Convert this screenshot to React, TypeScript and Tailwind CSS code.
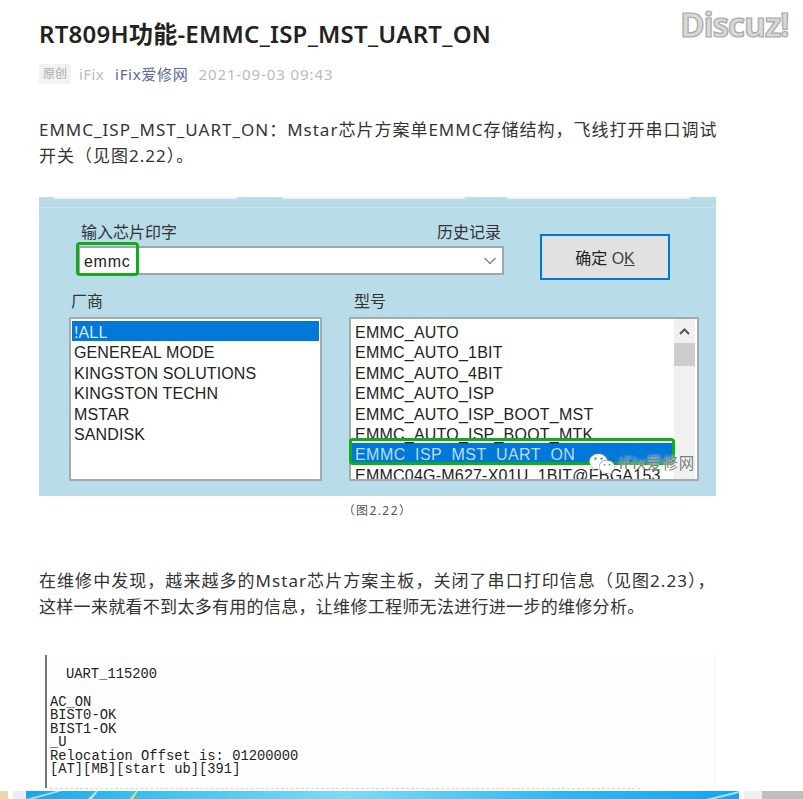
import React from 'react';
import { FaWeixin } from 'react-icons/fa';

const vendors = ['!ALL', 'GENEREAL MODE', 'KINGSTON SOLUTIONS', 'KINGSTON TECHN', 'MSTAR', 'SANDISK'];
const models = [
    'EMMC_AUTO',
    'EMMC_AUTO_1BIT',
    'EMMC_AUTO_4BIT',
    'EMMC_AUTO_ISP',
    'EMMC_AUTO_ISP_BOOT_MST',
    'EMMC_AUTO_ISP_BOOT_MTK',
    'EMMC_ISP_MST_UART_ON',
    'EMMC04G-M627-X01U_1BIT@FBGA153',
];
const uartLines = ['AC_ON', 'BIST0-OK', 'BIST1-OK', '_U', 'Relocation Offset is: 01200000', '[AT][MB][start ub][391]'];

const ChipDialog: React.FC = () => (
    <div className="relative h-[299px] bg-[#b8dce8] font-['Liberation_Sans','Noto_Sans_CJK_SC',sans-serif] text-[16px] text-[#222] overflow-hidden">
        {/* tabs cut off by the top of the picture */}
        <div className="flex h-[2px] pl-[15px]">
            <div className="w-[183px] bg-[#f2f2f2]" />
            <div className="w-[183px] ml-[45px] bg-[#f2f2f2]" />
            <div className="w-[183px] ml-[42px] bg-[#f2f2f2]" />
        </div>
        <div className="mt-[8px] border-t border-[#cfe2e8]">
            <div className="flex items-start pl-[39px] pt-[15px]">
                <div className="w-[426px]">
                    <div className="flex justify-between h-[20px] px-[3px] leading-[20px] text-[#333]">
                        <span>输入芯片印字</span>
                        <span>历史记录</span>
                    </div>
                    <div className="flex items-center justify-between h-[29px] mt-[3px] pl-[4px] pr-[5px] bg-white border-2 border-[#9fa6ab]">
                        <span className="pt-[2px] tracking-[0.7px] text-[#222]">emmc</span>
                        <svg width="14" height="8" viewBox="0 0 14 8" fill="none" stroke="#8a8a8a" strokeWidth="1.5">
                            <path d="M1.5 1 7 6.5 12.5 1" />
                        </svg>
                    </div>
                </div>
                <div className="flex items-center justify-center w-[130px] h-[46px] mt-[11px] ml-[36px] pt-[4px] bg-[#e1e1e1] border-2 border-[#0078d7] text-[#222]">
                    确定&nbsp;<span className="text-[#444]">O<span className="underline">K</span></span>
                </div>
            </div>
            <div className="flex pl-[30px] mt-[12px]">
                <div className="w-[253px]">
                    <div className="h-[20px] pl-[2px] leading-[20px] text-[#333]">厂商</div>
                    <div className="h-[164px] mt-[5px] pt-[2px] px-px bg-white border-2 border-[#a4abb0] tracking-[0.12px]">
                        {vendors.map((name, i) => (
                            <div key={name} className={i === 0 ? 'h-[20.4px] pl-[2px] leading-[24px] bg-[#0078d7] text-[#d5e9fa]' : 'h-[20.4px] pl-[2px] leading-[24px]'}>
                                {name}
                            </div>
                        ))}
                    </div>
                </div>
                <div className="w-[350px] ml-[27px]">
                    <div className="h-[20px] pl-[5px] leading-[20px] text-[#333]">型号</div>
                    <div className="flex h-[164px] mt-[5px] pr-[2px] bg-white border-2 border-[#a4abb0] overflow-hidden">
                        <div className="flex-1 pt-[2px] pl-px overflow-hidden whitespace-nowrap tracking-[0.22px]">
                            {models.map(name => (
                                <div key={name} className={name === 'EMMC_ISP_MST_UART_ON' ? 'h-[20.4px] pl-[3px] leading-[24px] tracking-[0.45px] bg-[#0078d7] text-[#bcdcf7]' : 'h-[20.4px] pl-[3px] leading-[24px]'}>
                                    {name}
                                </div>
                            ))}
                        </div>
                        <div className="w-[21px] bg-[#f0f0f0]">
                            <div className="flex items-center justify-center h-[24px]">
                                <svg width="11" height="7" viewBox="0 0 11 7" fill="none" stroke="#555" strokeWidth="2">
                                    <path d="M1 6 5.5 1.5 10 6" />
                                </svg>
                            </div>
                            <div className="h-[23px] bg-[#cdcdcd]" />
                        </div>
                    </div>
                </div>
            </div>
        </div>
        {/* green markers and watermark lie over the picture */}
        <div className="absolute left-[37px] top-[45px] w-[63px] h-[34px] border-[3px] border-[#12ab1a] rounded-[4px]" />
        <div className="absolute left-[310px] top-[241px] w-[326px] h-[27px] border-[3px] border-[#12ab1a] rounded-[4px]" />
        <div className="absolute left-[550px] top-[255px] flex items-center gap-[4px] text-[15.5px] tracking-[0.75px] text-[#7d7d7d] font-['Noto_Sans','Noto_Sans_CJK_SC',sans-serif] [text-shadow:0_0_3px_#fff]">
            <FaWeixin className="w-[26px] h-[24px] text-white [filter:drop-shadow(0_0_1px_#888)]" />
            <span>iFix爱修网</span>
        </div>
    </div>
);

const UartLog: React.FC = () => (
    <div className="ml-[6px] w-[670px]">
        <div className="h-[133px] pt-[13px] bg-[#fefefe] border-l-2 border-l-[#777] border-r border-r-[#f3f3f3] overflow-hidden font-['Liberation_Mono',monospace] text-[13.8px] leading-[13.5px] text-[#222] whitespace-pre">
            <div className="pl-[19px]">UART_115200</div>
            <div className="pl-[3px] mt-[14px]">
                {uartLines.join('\n')}
            </div>
        </div>
        {/* the next log line, cut off almost completely */}
        <div className="w-[590px] ml-[5px] border-t border-dashed border-[#d4d4d4]" />
    </div>
);

export default function App() {
    return (
        <div className="relative flex flex-col h-[799px] w-[803px] overflow-hidden bg-white font-['Noto_Sans','Noto_Sans_CJK_SC',sans-serif]">
            <div className="flex-1 pl-[39px] pr-[87px]">
                <h1 className="pt-[18px] text-[24px] leading-[32px] font-semibold tracking-[0.25px] text-[#222] whitespace-nowrap">RT809H功能-EMMC_ISP_MST_UART_ON</h1>
                <div className="flex items-center mt-[14px] h-[20px] text-[15px] text-[#bbb]">
                    <span className="flex items-center justify-center w-[32px] h-[20px] rounded-[2px] bg-[#f2f2f2] text-[12px] text-[#aaa]">原创</span>
                    <span className="ml-[8px] tracking-[0.4px]">iFix</span>
                    <span className="ml-[11px] tracking-[0.7px] text-[#576b95]">iFix爱修网</span>
                    <span className="ml-[10px] tracking-[0.9px]">2021-09-03 09:43</span>
                </div>
                <p className="mt-[33px] text-[17px] leading-[26px] tracking-[1px] text-[#333] whitespace-nowrap">
                    EMMC_ISP_MST_UART_ON：Mstar芯片方案单EMMC存储结构，飞线打开串口调试
                    <br />
                    开关（见图2.22）。
                </p>
                <div className="mt-[28px]">
                    <ChipDialog />
                </div>
                <p className="mt-[5px] h-[20px] text-center text-[12px] leading-[20px] tracking-[1.4px] text-[#555]">（图2.22）</p>
                <p className="mt-[47px] text-[17px] leading-[26px] tracking-[1.05px] text-[#333] whitespace-nowrap">
                    在维修中发现，越来越多的Mstar芯片方案主板，关闭了串口打印信息（见图2.23），
                    <br />
                    <span className="tracking-[0.3px]">这样一来就看不到太多有用的信息，让维修工程师无法进行进一步的维修分析。</span>
                </p>
                <div className="mt-[35px]">
                    <UartLog />
                </div>
            </div>

            {/* desktop peeking through at the bottom of the page */}
            <div className="flex h-[8px] shrink-0">
                <div className="flex w-[26px]">
                    <div className="w-[8px] bg-[#e5d9b0]" />
                    <div className="w-[5px] bg-white" />
                    <div className="w-[12px] bg-[#e8eef5]" />
                </div>
                <svg className="w-[713px] h-[8px]" viewBox="0 0 713 8" preserveAspectRatio="none">
                    <defs>
                        <linearGradient id="desk" x1="0" x2="1" y1="0" y2="0">
                            <stop offset="0" stopColor="#17a7ee" />
                            <stop offset="0.12" stopColor="#2cbcf2" />
                            <stop offset="0.45" stopColor="#7bdcf6" />
                            <stop offset="0.75" stopColor="#2ab8f7" />
                            <stop offset="1" stopColor="#13a6f6" />
                        </linearGradient>
                    </defs>
                    <rect width="713" height="8" fill="url(#desk)" />
                    <path d="M0 8 30 0h6L8 8z" fill="#9fe2fa" />
                    <path d="M62 8 70 0h2l-6 8z" fill="#b5ecfb" />
                    <path d="M104 8 110 0h2l-5 8z" fill="#cfe86a" />
                    <path d="M680 8 713 0v2l-24 6z" fill="#a6e4fa" />
                </svg>
                <div className="w-[5px]" />
                <div className="w-[18px] bg-[#eeeeee]" />
                <div className="flex-1 bg-[#bfbfbf]" />
            </div>

            <div className="absolute left-[680px] top-[4px] text-[33.5px] leading-[40px] tracking-[-1.2px] font-bold font-['Open_Sans',sans-serif] text-[#d8d8d8] [-webkit-text-stroke:1.2px_#a8a8a8]">Discuz!</div>
        </div>
    );
}
